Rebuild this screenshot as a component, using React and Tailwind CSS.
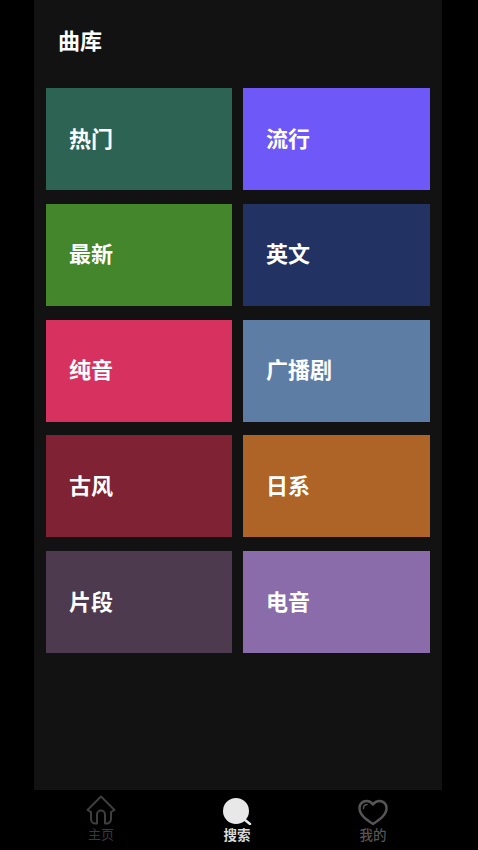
const categories = [
  { label: '热门', color: 'bg-[#2d6353]' },
  { label: '流行', color: 'bg-[#6e58f8]' },
  { label: '最新', color: 'bg-[#43862b]' },
  { label: '英文', color: 'bg-[#223263]' },
  { label: '纯音', color: 'bg-[#d7325f]' },
  { label: '广播剧', color: 'bg-[#5e7da5]' },
  { label: '古风', color: 'bg-[#7f2334]' },
  { label: '日系', color: 'bg-[#ad6426]' },
  { label: '片段', color: 'bg-[#4e3a4f]' },
  { label: '电音', color: 'bg-[#8a6cab]' },
]

function HomeIcon() {
  return (
    <svg width="30" height="30" viewBox="0 0 30 30" fill="none" stroke="#3f3f3f" strokeWidth="2" strokeLinejoin="round" strokeLinecap="round">
      <path d="M1.5 15 15 1.5 28.5 15l-3.500 2V24a4.500 4.500 0 0 1-4.500 4.500H19V19.500a4 4 0 0 0-8 0V28.500H9.500A4.500 4.500 0 0 1 5 24V17z" />
    </svg>
  )
}

function SearchIcon() {
  return (
    <svg width="30" height="30" viewBox="0 0 30 30" fill="none">
      <circle cx="14" cy="16" r="13" fill="#e8e8e8" />
      <path d="M23 25 28 29" stroke="#e8e8e8" strokeWidth="2.500" strokeLinecap="round" />
    </svg>
  )
}

function HeartIcon() {
  return (
    <svg width="30" height="30" viewBox="0 0 30 30" fill="none" stroke="#555555" strokeWidth="2.500" strokeLinecap="round" strokeLinejoin="round">
      <path d="M15 29C8 24.500 1.500 20 1.500 13 1.500 9 4.500 6 8.500 6c2.800 0 5 1.300 6.500 3.500C16.500 7.300 18.700 6 21.500 6c4 0 7 3 7 7 0 7-6.500 11.500-13.500 16z" />
      <path d="M5.500 13.500c0-2.500 1.500-4 3.500-4" strokeWidth="1.500" />
    </svg>
  )
}

export default function App() {
  return (
    <div className="w-[478px] h-[850px] bg-black flex flex-col overflow-hidden font-['Noto_Sans_CJK_SC',sans-serif]">
      {/* Main panel */}
      <div className="ml-[34px] w-[408px] h-[790px] shrink-0 bg-[#121212] px-3">
        <h1 className="h-[88px] pl-[12px] pt-[24px] text-[22px] leading-[30px] font-bold text-white">曲库</h1>
        <div className="grid grid-cols-[186px_187px] gap-x-[11px] gap-y-[13.75px]">
          {categories.map(({ label, color }) => (
            <div key={label} className={`h-[102px] flex items-center pl-[23px] pb-[4px] text-[22px] font-bold text-white ${color}`}>
              {label}
            </div>
          ))}
        </div>
      </div>

      {/* Tab bar */}
      <nav className="pl-[33px] flex-1 grid grid-cols-[136px_136px_136px]">
        <div className="flex flex-col items-center pt-[5px] text-[13px] leading-[16px] text-[#3a3a3a]">
          <HomeIcon />
          <span className="mt-[1px]">主页</span>
        </div>
        <div className="flex flex-col items-center pt-[5px] text-[13.5px] leading-[16px] font-bold text-[#d8d8d8]">
          <SearchIcon />
          <span className="mt-[1px]">搜索</span>
        </div>
        <div className="flex flex-col items-center pt-[5px] text-[13.5px] leading-[16px] font-medium text-[#555555]">
          <HeartIcon />
          <span className="mt-[1px]">我的</span>
        </div>
      </nav>
    </div>
  )
}
